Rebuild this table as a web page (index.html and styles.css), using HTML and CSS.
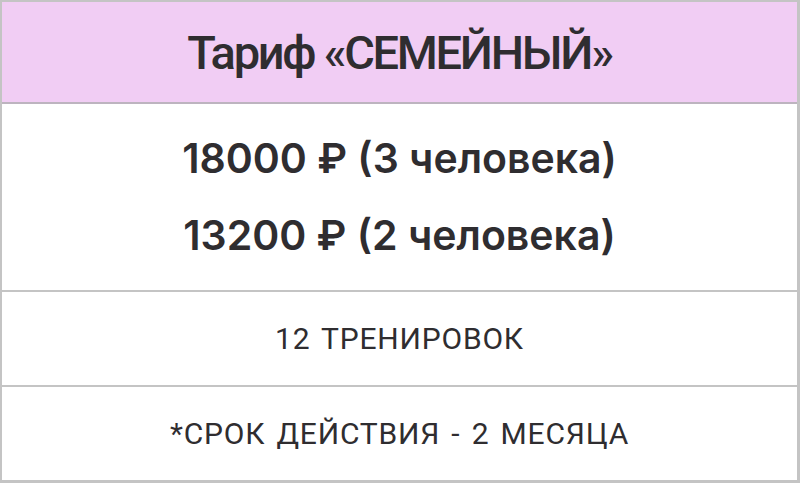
FILE: index.html
```html
<!DOCTYPE html>
<html lang="ru">
<head>
<meta charset="utf-8">
<link rel="stylesheet" href="styles.css">
</head>
<body>
<div class="tariff">
  <div class="tariff-head"><h1 class="tariff-title">Тариф «СЕМЕЙНЫЙ»</h1></div>
  <div class="tariff-prices">
    <p class="price">18000 ₽ (3 человека)</p>
    <p class="price">13200 ₽ (2 человека)</p>
  </div>
  <div class="tariff-row"><span class="row-text">12 ТРЕНИРОВОК</span></div>
  <div class="tariff-row"><span class="row-text">*СРОК ДЕЙСТВИЯ - 2 МЕСЯЦА</span></div>
</div>
</body>
</html>
```
FILE: styles.css
```css
html, body {
  margin: 0;
  padding: 0;
  background: #ffffff;
}
.tariff {
  width: 800px;
  height: 483px;
  box-sizing: border-box;
  border-left: 2px solid #c4c4c4;
  border-right: 3px solid #c4c4c4;
  border-top: 2px solid #c4c4c4;
  border-bottom: 3px solid #c4c4c4;
  display: flex;
  flex-direction: column;
  color: #2f2d30;
}
.tariff-head {
  height: 100px;
  background: #f1cdf4;
  border-bottom: 2px solid #bdb4bf;
  display: flex;
  align-items: center;
  justify-content: center;
}
.tariff-title {
  margin: 0;
  font-family: Roboto, "Liberation Sans", sans-serif;
  font-weight: 500;
  font-size: 47px;
  letter-spacing: -2.3px;
  line-height: 1;
}
.tariff-prices {
  height: 186px;
  border-bottom: 2px solid #c4c4c4;
  display: flex;
  flex-direction: column;
  align-items: center;
  justify-content: center;
  gap: 36px;
}
.price {
  margin: 0;
  font-family: Inter, "Noto Sans", sans-serif;
  font-weight: 600;
  font-size: 41px;
  line-height: 1;
}
.tariff-row {
  height: 93px;
  border-bottom: 2px solid #c4c4c4;
  display: flex;
  align-items: center;
  justify-content: center;
}
.tariff-row:last-child {
  border-bottom: none;
  flex: 1;
}
.row-text {
  font-family: Roboto, "Liberation Sans", sans-serif;
  font-weight: 400;
  font-size: 30px;
  letter-spacing: 0.8px;
  word-spacing: 3px;
  line-height: 1;
}
```
